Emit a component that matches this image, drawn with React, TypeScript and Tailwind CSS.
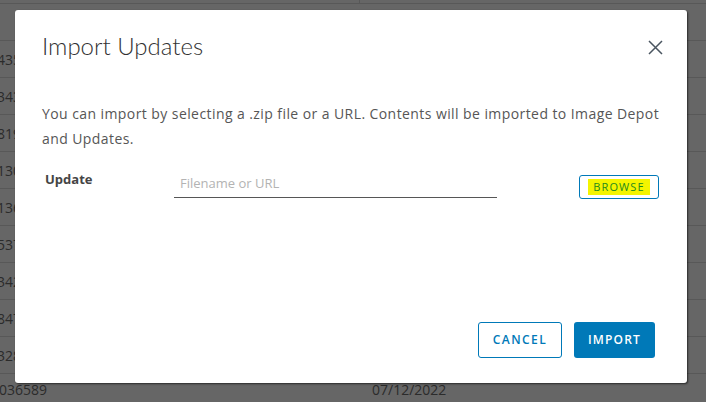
import React from "react";

const rows = ["4351", "3432", "8190", "1304", "1365", "5377", "3428", "8471", "3286"];

export default function App() {
  return (
    <div
      className="relative w-[706px] h-[402px] overflow-hidden bg-[#666666]"
      style={{ fontFamily: "'Open Sans', 'Liberation Sans', sans-serif" }}
    >
      {/* background table */}
      <div className="flex flex-col">
        <div className="h-[3px] flex">
          <div className="w-[360px] border-r border-[#585858]" />
        </div>
        <div className="h-[37px] border-t border-[#585858]" />
        {rows.map((r) => (
          <div
            key={r}
            className="h-[37px] border-t border-[#585858] flex items-center text-[14px] text-[#2b2b2b]"
          >
            <span className="-ml-[3px]">{r}</span>
          </div>
        ))}
        <div className="h-[37px] border-t border-[#585858] flex items-start pt-[5px] text-[14px] text-[#2b2b2b]">
          <span className="w-[373px] -ml-[1px]">036589</span>
          <span>07/12/2022</span>
        </div>
      </div>

      {/* modal */}
      <div className="absolute left-[15px] top-[10px] w-[672px] h-[373px] bg-white rounded-[3px] shadow-[1px_1px_2px_rgba(0,0,0,0.6)] flex flex-col">
        <div className="flex items-start justify-between pl-[27px] pr-[24px] pt-[21px]">
          <h1
            className="text-[24px] leading-[30px] text-[#313131]"
            style={{ fontFamily: "Lato, 'Open Sans', sans-serif", fontWeight: 300 }}
          >
            Import Updates
          </h1>
          <svg width="15" height="15" viewBox="0 0 15 15" className="mt-[9px]">
            <path d="M1 1 L14 14 M14 1 L1 14" stroke="#4a5560" strokeWidth="1.5" fill="none" />
          </svg>
        </div>

        <p className="mt-[40px] pl-[27px] pr-[18px] text-[14px] leading-[25px] tracking-[0.03em] text-[#565656]">
          You can import by selecting a .zip file or a URL. Contents will be imported to Image Depot and Updates.
        </p>

        <div className="mt-[17px] flex items-start pl-[30px] pr-[28px]">
          <div className="w-[129px] pt-[2px] text-[13px] font-bold text-[#454545]">Update</div>
          <div className="w-[323px] h-[30px] border-b border-[#565656] pl-[6px] pt-[6px] text-[13px] text-[#b3b3b3]">
            Filename or URL
          </div>
          <div className="flex-1" />
          <div className="mt-[7px] w-[80px] h-[24px] border border-[#0079b8] rounded-[3px] flex items-center justify-center">
            <span className="bg-[#f4f400] px-[5px] text-[11px] leading-[16px] font-medium tracking-[0.1em] text-[#1d8a1d]">
              BROWSE
            </span>
          </div>
        </div>

        <div className="flex-1" />

        <div className="flex justify-end gap-[12px] pr-[32px] pb-[25px]">
          <button className="w-[84px] h-[36px] border border-[#0079b8] rounded-[3px] text-[12px] font-semibold tracking-[0.12em] text-[#0079b8] bg-white">
            CANCEL
          </button>
          <button className="w-[81px] h-[36px] rounded-[3px] text-[12px] font-semibold tracking-[0.1em] text-white bg-[#0079b8]">
            IMPORT
          </button>
        </div>
      </div>
    </div>
  );
}
